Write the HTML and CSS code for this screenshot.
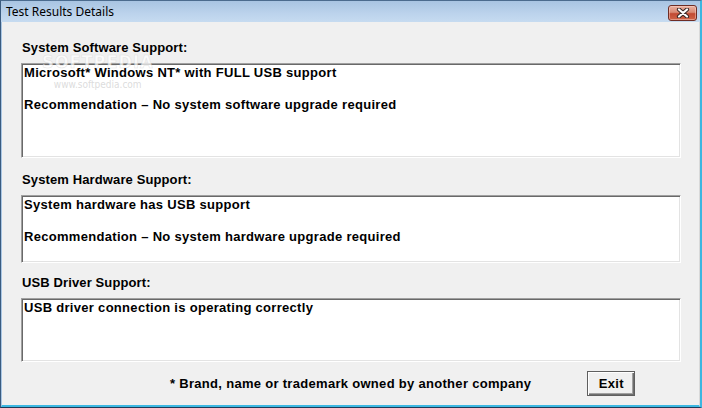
FILE: index.html
```html
<!DOCTYPE html>
<html lang="en">
<head>
<meta charset="utf-8">
<title>Test Results Details</title>
<link rel="stylesheet" href="styles.css">
</head>
<body>
<div class="window">
  <div class="titlebar">
    <span class="title">Test Results Details</span>
    <button class="close" type="button" aria-label="Close">
      <svg width="14" height="10" viewBox="0 0 14 10">
        <path d="M3 1.5 L11 8.5 M11 1.5 L3 8.5" stroke="#3a2a28" stroke-width="4.2" stroke-linecap="round"/>
        <path d="M3 1.5 L11 8.5 M11 1.5 L3 8.5" stroke="#ffffff" stroke-width="2.2" stroke-linecap="round"/>
      </svg>
    </button>
  </div>
  <div class="client">
    <section class="group group-software">
      <div class="label">System Software Support:</div>
      <div class="field field-software">
        <p>Microsoft* Windows NT* with FULL USB support</p>
        <p>&nbsp;</p>
        <p>Recommendation &ndash; No system software upgrade required</p>
      </div>
    </section>
    <section class="group group-hardware">
      <div class="label">System Hardware Support:</div>
      <div class="field field-hardware">
        <p>System hardware has USB support</p>
        <p>&nbsp;</p>
        <p>Recommendation &ndash; No system hardware upgrade required</p>
      </div>
    </section>
    <section class="group group-driver">
      <div class="label">USB Driver Support:</div>
      <div class="field field-driver">
        <p>USB driver connection is operating correctly</p>
      </div>
    </section>
    <div class="footer">
      <span class="note">* Brand, name or trademark owned by another company</span>
      <button class="exit" type="button">Exit</button>
    </div>
    <div class="stamp">
      <span class="stamp-name">SOFTPEDIA</span>
      <span class="stamp-url">www.softpedia.com</span>
    </div>
  </div>
</div>
</body>
</html>
```

FILE: styles.css
```css
html, body {
  margin: 0;
  padding: 0;
  width: 702px;
  height: 408px;
  overflow: hidden;
  background: #f0f0f0;
}

.window {
  box-sizing: border-box;
  width: 702px;
  height: 408px;
  display: flex;
  flex-direction: column;
  border-top: 1px solid #4b6b8e;
  border-left: 1px solid #3a5b7f;
  border-right: 2px solid #3cb6e0;
  border-bottom: 1px solid #1d3a57;
}

/* caption bar */
.titlebar {
  height: 21px;
  flex: none;
  display: flex;
  align-items: center;
  background: linear-gradient(to bottom, #a8c4e2 0%, #bcd3ec 60%, #c6dbf0 100%);
  font-family: "Noto Sans", "Open Sans", sans-serif;
  font-size: 12px;
  color: #000;
}

.title {
  padding-left: 5px;
  flex: 1;
  line-height: 21px;
}

.close {
  box-sizing: border-box;
  width: 29px;
  height: 16px;
  margin: 3px 3px 0 0;
  padding: 0;
  display: flex;
  align-items: center;
  justify-content: center;
  border: 1px solid #6e2d25;
  border-radius: 3px;
  background: linear-gradient(to bottom, #eab0a0 0%, #d98a74 45%, #c24a33 55%, #cf6447 100%);
  box-shadow: inset 0 0 0 1px rgba(255, 220, 210, 0.45);
}

.close svg {
  display: block;
}

/* dialog body */
.client {
  position: relative;
  flex: 1;
  box-sizing: border-box;
  display: flex;
  flex-direction: column;
  padding: 18px 0 0 19px;
  background: #f0f0f0;
  border-left: 1px solid #a9c6e4;
  border-right: 1px solid #d9d9d9;
  border-bottom: 2px solid #3cb8e2;
  font-family: "Liberation Sans", Arial, sans-serif;
  font-weight: bold;
  font-size: 13px;
  color: #000;
}

.label {
  line-height: 16px;
  height: 16px;
  margin-bottom: 7px;
  padding-left: 1px;
  letter-spacing: 0.12px;
}

.group-hardware {
  margin-top: 14px;
}

.group-driver {
  margin-top: 12px;
}

.field {
  box-sizing: border-box;
  width: 660px;
  padding: 0 2px;
  background: #fff;
  border-style: solid;
  border-width: 1px;
  border-color: #a0a0a0 #ffffff #ffffff #a0a0a0;
  box-shadow: inset 1px 1px 0 #696969, inset -1px -1px 0 #e3e3e3;
  line-height: 16px;
  padding-top: 1px;
  letter-spacing: 0.3px;
}

.field p {
  margin: 0;
  white-space: nowrap;
}

.field-software { height: 95px; }
.field-hardware { height: 68px; }
.field-driver { height: 64px; }

.footer {
  margin-top: 9px;
  height: 25px;
  display: flex;
  align-items: center;
  padding-left: 149px;
}

.note {
  line-height: 16px;
  letter-spacing: 0.3px;
}

.exit {
  box-sizing: border-box;
  width: 48px;
  height: 25px;
  margin-left: 56px;
  padding: 0;
  background: #f0f0f0;
  border: 1px solid #5f5f5f;
  box-shadow: inset 1px 1px 0 #ffffff, inset -1px -1px 0 #6e6e6e, inset -2px -2px 0 #a0a0a0;
  font-family: "Liberation Sans", Arial, sans-serif;
  font-weight: bold;
  font-size: 13px;
  letter-spacing: 0.3px;
  color: #000;
}

/* faint site stamp across the first field */
.stamp {
  position: absolute;
  left: 40px;
  top: 31px;
  display: flex;
  flex-direction: column;
  align-items: center;
  pointer-events: none;
  font-family: "DejaVu Sans Condensed", "DejaVu Sans", sans-serif;
}

.stamp-name {
  font-size: 18px;
  font-weight: bold;
  letter-spacing: 1px;
  line-height: 18px;
  color: rgba(255, 255, 255, 0.7);
  -webkit-text-stroke: 0.5px rgba(200, 200, 200, 0.5);
}

.stamp-url {
  margin-top: 8px;
  font-size: 10px;
  font-weight: normal;
  line-height: 12px;
  color: rgba(190, 190, 190, 0.55);
}
```
